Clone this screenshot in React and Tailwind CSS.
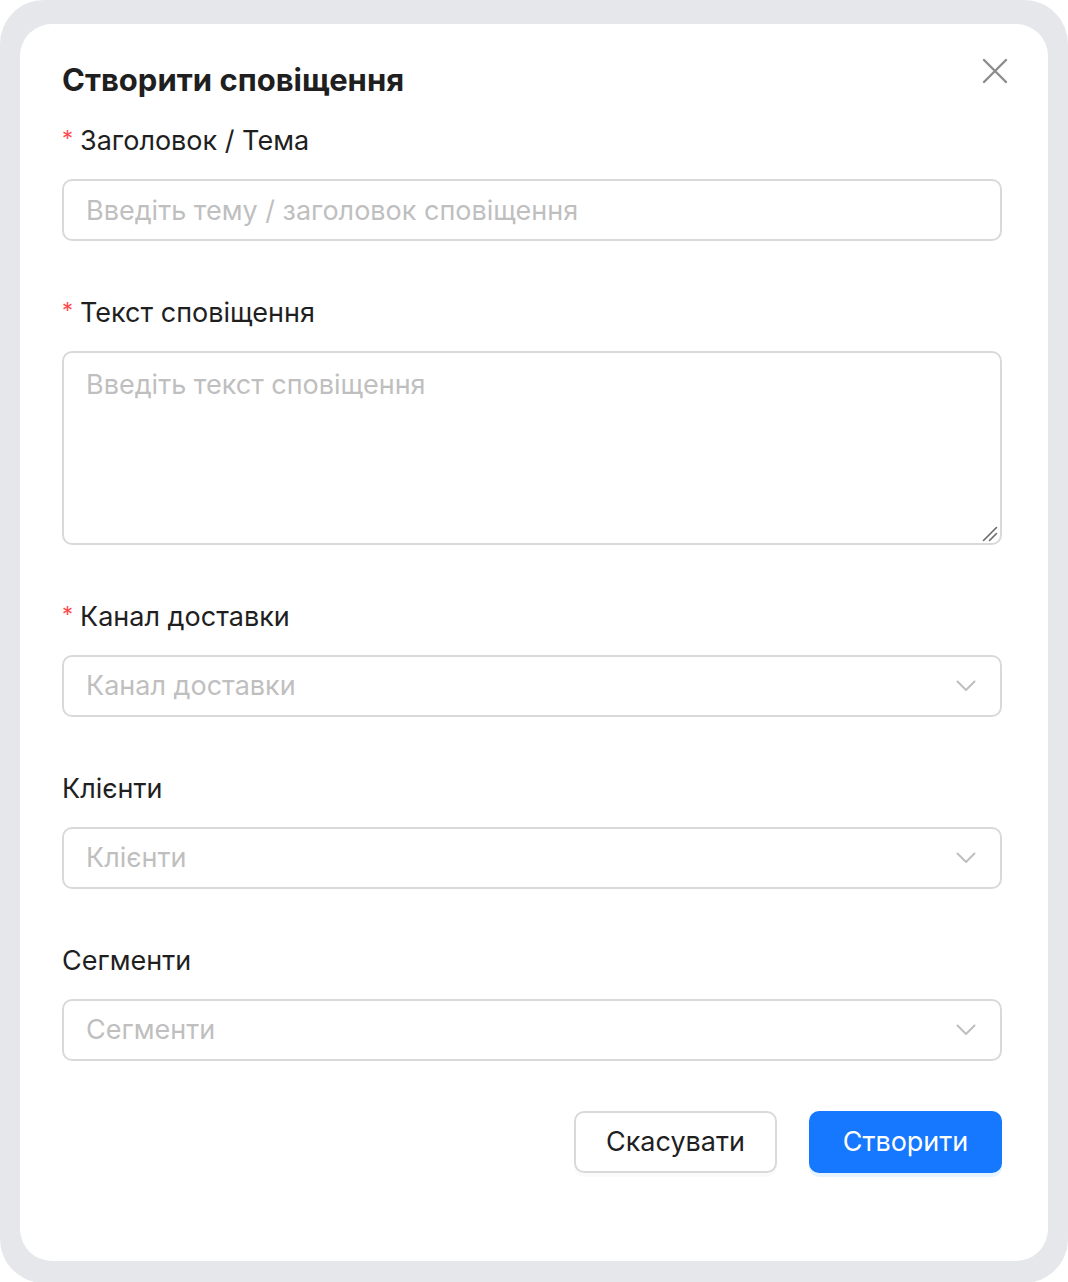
const font = { fontFamily: 'Inter, "Noto Sans", "Liberation Sans", sans-serif' };

function Label({ children, required }) {
  return (
    <div className="h-[44px] mb-[16px] flex items-center text-[27px] text-[#1f1f1f]">
      {required && <span className="text-[#ff4d4f] text-[22px] mr-[7px] leading-none relative -top-[3px]">*</span>}
      <span>{children}</span>
    </div>
  );
}

function Chevron() {
  return (
    <svg width="20" height="12" viewBox="0 0 20 12" fill="none" className="absolute right-[24px] top-1/2 -translate-y-1/2">
      <path d="M1.5 1.5 L10 10 L18.5 1.5" stroke="#bfbfbf" strokeWidth="2" strokeLinecap="round" strokeLinejoin="round" />
    </svg>
  );
}

function SelectBox({ placeholder }) {
  return (
    <div className="relative h-[62px] rounded-[10px] border-2 border-[#d9d9d9] bg-white flex items-center pl-[22px] pr-[60px] text-[27px] text-[#bfbfbf]">
      <span>{placeholder}</span>
      <Chevron />
    </div>
  );
}

export default function App() {
  return (
    <div className="bg-white" style={font}>
      <div className="bg-[#e5e7eb] rounded-[44px] pt-[24px] pb-[22px] px-[20px]">
        <div className="relative bg-white rounded-[32px] pl-[42px] pr-[46px] pt-[34px] pb-[88px]">
          <button className="absolute right-[39px] top-[33px] w-[28px] h-[28px] flex items-center justify-center">
            <svg width="26" height="26" viewBox="0 0 26 26" fill="none">
              <path d="M2 2 L24 24 M24 2 L2 24" stroke="#8c8c8c" strokeWidth="2.4" strokeLinecap="round" />
            </svg>
          </button>

          <h1 className="h-[44px] flex items-center text-[31px] font-bold text-[#1f1f1f] mb-[17px]">
            Створити сповіщення
          </h1>

          <Label required>Заголовок / Тема</Label>
          <input
            className="w-full h-[62px] rounded-[10px] border-2 border-[#d9d9d9] px-[22px] text-[27px] text-[#1f1f1f] placeholder:text-[#bfbfbf] outline-none mb-[50px]"
            placeholder="Введіть тему / заголовок сповіщення"
          />

          <Label required>Текст сповіщення</Label>
          <div className="relative mb-[50px]">
            <textarea
              className="block w-full h-[194px] resize-none rounded-[10px] border-2 border-[#d9d9d9] px-[22px] py-[14px] text-[27px] leading-[36px] text-[#1f1f1f] placeholder:text-[#bfbfbf] outline-none"
              placeholder="Введіть текст сповіщення"
            />
            <svg width="16" height="16" viewBox="0 0 16 16" fill="none" className="absolute right-[4px] bottom-[3px]">
              <path d="M1.5 14.5 L14.5 1.5 M7.5 14.5 L14.5 7.5" stroke="#6b6b6b" strokeWidth="1.6" strokeLinecap="round" />
            </svg>
          </div>

          <Label required>Канал доставки</Label>
          <div className="mb-[50px]">
            <SelectBox placeholder="Канал доставки" />
          </div>

          <Label>Клієнти</Label>
          <div className="mb-[50px]">
            <SelectBox placeholder="Клієнти" />
          </div>

          <Label>Сегменти</Label>
          <SelectBox placeholder="Сегменти" />

          <div className="flex justify-end gap-[32px] mt-[50px]">
            <button className="h-[62px] w-[203px] rounded-[10px] border-2 border-[#d9d9d9] bg-white text-[27px] text-[#1f1f1f] shadow-[0_4px_0_rgba(0,0,0,0.02)]">
              Скасувати
            </button>
            <button className="h-[62px] w-[193px] rounded-[10px] bg-[#1677ff] text-[27px] text-white shadow-[0_4px_0_rgba(5,145,255,0.1)]">
              Створити
            </button>
          </div>
        </div>
      </div>
    </div>
  );
}
